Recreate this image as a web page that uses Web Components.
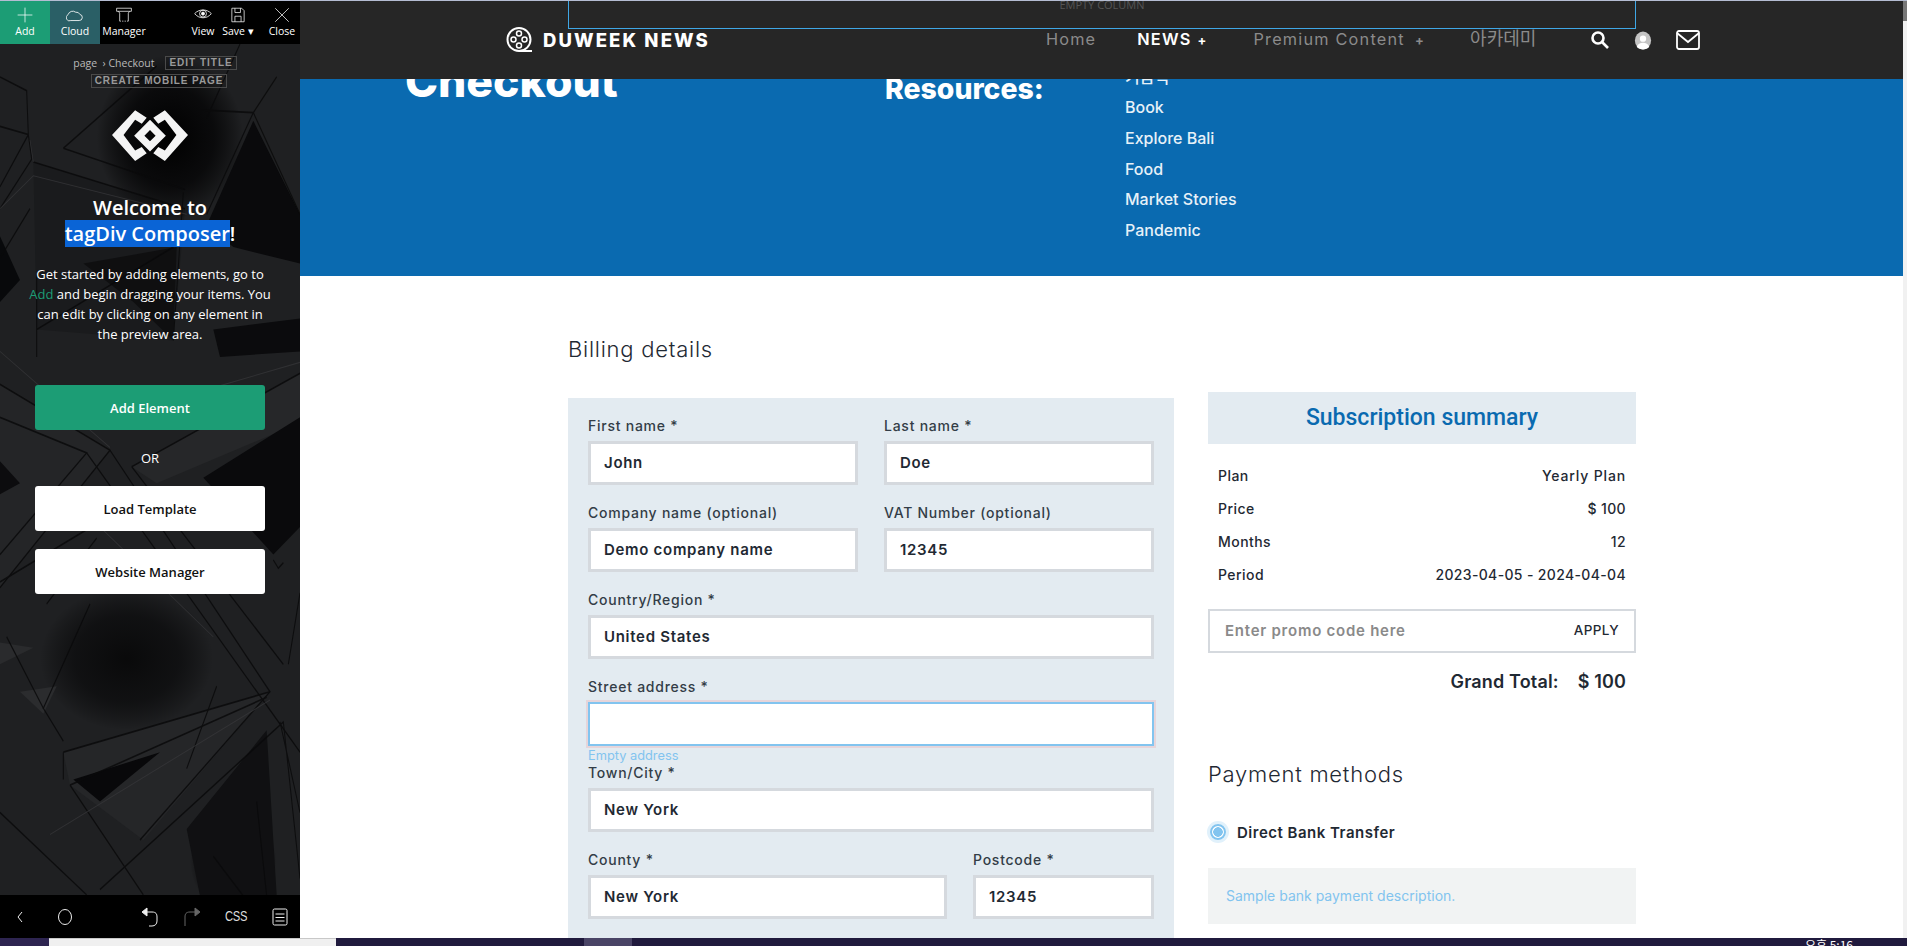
<!DOCTYPE html>
<html lang="en">
<head>
<meta charset="utf-8">
<title>Checkout</title>
<style>
html,body{margin:0;padding:0;height:946px;overflow:hidden;background:#fff}
body{display:grid;grid-template-columns:300px 1fr;grid-template-rows:1px 937px 8px;font-family:"Inter","Noto Sans CJK KR",sans-serif}
.topline{grid-column:1/3;background:#b4bcd2}
task-bar{grid-column:1/3}
</style>
</head>
<body>
<div class="topline"></div>

<td-sidebar>
  <td-tool slot="tools" label="Add" w="50" tone="add"><svg viewBox="0 0 26 26"><path d="M13 1v24M1 13h24"/></svg></td-tool>
  <td-tool slot="tools" label="Cloud" w="50" tone="cloud"><svg viewBox="0 0 26 26" style="width:18px;height:18px"><path d="M7 21h12a4.500 4.500 0 0 0 1-8.900a5.500 5.500 0 0 0-6-3.100a7 7 0 0 0-11 3.500a4.600 4.600 0 0 0 4 8.500z"/></svg></td-tool>
  <td-tool slot="tools" label="Manager" w="48"><svg viewBox="0 0 26 26"><path d="M1 2h24v5H1zM4 7l2 3v13M22 7l-2 3v13"/><path stroke-dasharray="2 2" d="M6 23h14"/></svg></td-tool>
  <span slot="tools" style="flex:1"></span>
  <td-tool slot="tools" label="View" w="30"><svg viewBox="0 0 26 26" style="width:18px;height:18px"><path d="M1 11c6-7 18-7 24 0c-6 8-18 8-24 0z"/><circle cx="13" cy="11" r="5"/><circle cx="13" cy="11" r="2.200" fill="#fff"/></svg></td-tool>
  <td-tool slot="tools" label="Save ▾" w="40"><svg viewBox="0 0 26 26"><path d="M3 2h16l4 4v18H3zM8 2v7h9V2M8 24v-9h10v9"/></svg></td-tool>
  <span slot="tools" style="width:6px"></span>
  <td-tool slot="tools" label="Close" w="36"><svg viewBox="0 0 26 26"><path d="M2 2l22 22M24 2L2 24"/></svg></td-tool>
</td-sidebar>

<preview-pane>
  <site-header></site-header>
  <page-hero></page-hero>
  <checkout-body></checkout-body>
</preview-pane>

<task-bar></task-bar>

<script>
class TdTool extends HTMLElement{
  constructor(){
    super();
    this.attachShadow({mode:'open'});
    const tone = this.getAttribute('tone');
    const bg = tone === 'add' ? '#1c9d75' : tone === 'cloud' ? '#2a5f66' : 'transparent';
    this.shadowRoot.innerHTML = `
    <style>
    :host{display:flex;flex-direction:column;align-items:center;width:${this.getAttribute('w')}px;height:43px;background:${bg};color:#fff;font:500 10.500px "Open Sans",sans-serif}
    .ic{box-sizing:border-box;height:24px;display:flex;align-items:center;justify-content:center;padding-top:4px}
    ::slotted(svg){width:16px;height:16px;fill:none;stroke:#fff;stroke-width:1.200}
    span{line-height:13px;white-space:nowrap}
    </style>
    <div class="ic"><slot></slot></div>
    <span>${this.getAttribute('label')}</span>`;
  }
}
customElements.define('td-tool',TdTool);

const sidebarTpl = document.createElement('template');
sidebarTpl.innerHTML = `
<style>
:host{display:flex;flex-direction:column;position:relative;width:300px;height:937px;background:#1f2022;overflow:hidden;color:#fff;font-family:"Open Sans",sans-serif}
.art{position:absolute;left:0;top:43px;width:300px;height:852px}
.tools,.foot,.inner{position:relative}
.tools{display:flex;height:43px;background:#000}
.inner{flex:1;display:flex;flex-direction:column;align-items:center}
.crumbs{display:flex;align-items:center;justify-content:center;height:15px;margin:11px 0 0 10px;font-size:10.500px;color:#b9b9b9;gap:5px}
.tag{border:1px solid #4a4a4a;font:700 10px "Liberation Sans",sans-serif;letter-spacing:1px;color:#9a9a9a;padding:0 3px;line-height:12px;margin-left:6px}
.tag.mobile{margin:4px 0 0 18px;line-height:12px;letter-spacing:.9px;padding:0 3px}
.logo{margin-top:21px;display:block}
h2{margin:33px 0 0;font-size:20px;font-weight:600;line-height:26px;text-align:center}
h2 b{font-weight:600;background:#0a64d6}
p{margin:17px 0 0;width:245px;font-size:13px;line-height:20px;text-align:center;color:#fff}
p i{font-style:normal;color:#1c9d75}
.btn{display:flex;align-items:center;justify-content:center;width:230px;height:45px;border-radius:3px;background:#fff;color:#111;font-size:13px;font-weight:600}
.btn.go{background:#1c9d75;color:#fff;margin-top:41px}
.or{height:56px;line-height:56px;font-size:13px}
.btn + .btn{margin-top:18px}
.foot{height:43px;background:#000;display:flex;align-items:center;color:#ddd}
.foot svg{position:absolute;top:12px;width:20px;height:20px;fill:none;stroke:#eee;stroke-width:1}
.foot span{position:absolute;left:225px;top:13px;font:400 14px "Liberation Sans",sans-serif;letter-spacing:-.3px;transform:scaleX(.8);transform-origin:left}
</style>
<svg class="art" viewBox="0 0 900 1552" preserveAspectRatio="none">
  <defs>
    <radialGradient id="d"><stop offset="0" stop-color="#000"/><stop offset=".6" stop-color="#050506" stop-opacity=".8"/><stop offset="1" stop-color="#000" stop-opacity="0"/></radialGradient>
  </defs>
  <polygon points="0,620 330,740 0,990" fill="#242527"/>
  <polygon points="190,1290 810,1180 430,1450 210,1350" fill="#252628"/>
  <polygon points="395,770 900,600 900,690 470,800" fill="#262729"/>
  <polygon points="100,215 555,300 520,540 110,520" fill="#1a1b1d"/>
  <ellipse cx="510" cy="170" rx="220" ry="150" fill="url(#d)"/>
  <ellipse cx="380" cy="1120" rx="260" ry="130" fill="url(#d)" opacity=".7"/>
  <ellipse cx="700" cy="1490" rx="130" ry="90" fill="url(#d)"/>
  <polygon points="620,330 760,140 900,310 900,400 700,370" fill="#0a0a0c"/>
  <polygon points="250,400 530,370 520,540 400,470" fill="#0c0c0e" opacity=".8"/>
  <polygon points="640,520 900,500 900,560 660,570" fill="#0b0b0d"/>
  <polygon points="0,350 60,430 0,470" fill="#08090b"/>
  <polygon points="610,790 900,680 900,880 820,930" fill="#0a0a0c"/>
  <polygon points="0,760 60,800 0,820" fill="#0c0c0e"/>
  <polygon points="220,1340 480,1290 300,1380" fill="#08080a"/>
  <polygon points="0,1090 100,1100 0,1130" fill="#2a2b2d"/>
  <polygon points="60,1180 170,1170 130,1220" fill="#2b2c2e"/>
  <polygon points="560,1430 800,1250 830,1550 600,1552" fill="#101012"/>
  <g fill="none" stroke="#0a0a0b" stroke-width="3" opacity=".85">
    <path d="M0 150L85 165L80 85L0 60M85 165L0 260M85 165L95 210L0 300M190 190L470 40M190 190L555 265M100 215L555 300M90 300L0 390"/>
    <path d="M620 135L720 0M600 120L760 125L830 60M760 125L900 310M760 125L620 310M550 270L520 540M110 420V570M110 520L520 370"/>
    <path d="M0 620L330 740L0 990M0 680L260 745L0 930M330 740L810 1180L420 1450M395 770L850 1130M395 770L900 600M260 745L900 1290M140 1020L290 900"/>
    <path d="M190 1290L810 1180M190 1290V1340M210 1350L800 1190M210 1350L430 1550M0 1400L260 1550M300 1540L850 1235L900 1520M840 1235L900 1400"/>
    <path d="M640 1480L730 1552M770 1380L800 1552M650 1170L560 1320M190 1270L130 1210L270 1020M820 940L835 955L850 945M865 1130L900 1000"/>
    <path d="M0 980L300 870M20 1080L130 1210"/>
  </g>
  <g fill="none" stroke="#37383a" stroke-width="2" opacity=".7">
    <path d="M0 300L100 240L560 310M100 215L90 175M330 735L0 560M900 580L560 640M300 880L640 1080M150 1440L810 1195"/>
  </g>
</svg>
<div class="tools"><slot name="tools"></slot></div>
<div class="inner">
  <div class="crumbs">page &nbsp;› Checkout <span class="tag">EDIT TITLE</span></div>
  <div class="tag mobile">CREATE MOBILE PAGE</div>
  <svg class="logo" width="76" height="53" viewBox="35 42 230 155">
    <path fill="#f4f4f4" d="M105 43L140 66L125 84L105 72L70 118L105 165L125 154L140 173L105 197L35 118zM195 43L160 66L175 84L195 72L230 118L195 165L175 154L160 173L195 197L265 118z"/>
    <path fill="#f4f4f4" fill-rule="evenodd" d="M150 72L198 120L150 168L102 120zM150 103L133 120L150 137L167 120z"/>
  </svg>
  <h2>Welcome to<br><b>tagDiv Composer</b>!</h2>
  <p>Get started by adding elements, go to <i>Add</i> and begin dragging your items. You can edit by clicking on any element in the preview area.</p>
  <div class="btn go">Add Element</div>
  <div class="or">OR</div>
  <div class="btn">Load Template</div>
  <div class="btn">Website Manager</div>
</div>
<div class="foot">
  <svg style="left:10px" viewBox="0 0 20 20"><path d="M12 5l-4 5 4 5"/></svg>
  <svg style="left:55px" viewBox="0 0 20 20"><ellipse cx="10" cy="10" rx="6.500" ry="7.500"/></svg>
  <svg style="left:141px" viewBox="0 0 20 20"><path d="M4 5h7c4 0 5 2 5 5v4c0 3-2 5-5 5H8"/><path fill="#eee" d="M6 1v8L1 5z"/></svg>
  <svg style="left:181px;stroke:#666" viewBox="0 0 20 20"><path d="M16 5H9C5 5 4 7 4 10v9"/><path fill="#666" d="M14 1v8l5-4z"/></svg>
  <span>CSS</span>
  <svg style="left:270px" viewBox="0 0 20 20"><rect x="3" y="2" width="14" height="16" rx="1.500"/><path d="M5.500 7h9M5.500 10.500h9M5.500 14h9"/></svg>
</div>`;
class TdSidebar extends HTMLElement{
  constructor(){
    super();
    this.attachShadow({mode:'open'});
    this.shadowRoot.appendChild(sidebarTpl.content.cloneNode(true));
  }
}
customElements.define('td-sidebar',TdSidebar);

class PreviewPane extends HTMLElement{
  constructor(){
    super();
    this.attachShadow({mode:'open'}).innerHTML = `
    <style>
    :host{display:block;position:relative;height:937px;overflow:hidden;background:#fff;padding-right:4px;box-sizing:border-box}
    .bar{position:absolute;right:0;top:0;bottom:0;width:4px;background:#f1f1f1}
    .bar i{display:block;height:20px;background:#777}
    </style>
    <slot></slot>
    <div class="bar"><i></i></div>`;
  }
}
customElements.define('preview-pane',PreviewPane);

const headerTpl = document.createElement('template');
headerTpl.innerHTML = `
<style>
:host{display:flex;align-items:center;position:relative;height:78px;background:#262626;color:#fff;padding-left:206px;font-family:"Inter","Noto Sans CJK KR",sans-serif;z-index:2}
.empty{position:absolute;left:268px;top:-1px;width:1066px;height:28px;border:1px solid #3fa7e6;border-top:0;text-align:center;font:400 11px/10px "Open Sans",sans-serif;color:#555;overflow:hidden}
.logo{display:flex;align-items:center;gap:10px;font-weight:800;font-size:18.500px;letter-spacing:2.100px;white-space:nowrap}
nav{display:flex;margin:-2px 0 0 336px;font-size:16.300px;letter-spacing:1.200px;color:#8b8b8b;white-space:nowrap}
nav a.on{color:#fff;font-weight:600}
nav em{font-style:normal;font-weight:700;margin-left:6px;font-size:13px}
.ko{font-size:18px;letter-spacing:0;line-height:20px}
.icons{display:flex;align-items:center;margin-left:54px}
</style>
<div class="empty">EMPTY COLUMN</div>
<div class="logo">
  <svg width="27" height="28" viewBox="0 0 27 28" fill="none" stroke="#fff" stroke-width="2">
    <circle cx="13" cy="13.500" r="11.500"/><path d="M13 25h13"/>
    <g stroke-width="1.500"><circle cx="13" cy="7.500" r="2.500"/><circle cx="13" cy="19.500" r="2.500"/><circle cx="7.500" cy="13.500" r="2.500"/><circle cx="18.500" cy="13.500" r="2.500"/></g>
  </svg>
  DUWEEK NEWS
</div>
<nav>
  <a>Home</a>
  <a class="on" style="margin-left:41px">NEWS<em>+</em></a>
  <a style="margin-left:46px">Premium Content<em>&nbsp;+</em></a>
  <a class="ko" style="margin-left:45px">아카데미</a>
</nav>
<div class="icons">
  <svg width="20" height="20" viewBox="0 0 20 20" fill="none" stroke="#fff" stroke-width="2.600"><circle cx="8" cy="8" r="5.500"/><path d="M12 12l6 6"/></svg>
  <svg style="margin-left:24px" width="18" height="21" viewBox="0 0 20 22"><ellipse cx="10" cy="11" rx="9" ry="10" fill="#c4c4c4"/><circle cx="10" cy="9" r="3.500" fill="#fff"/><path d="M3 18c2-6 12-6 14 0c-3 4-11 4-14 0z" fill="#fff"/></svg>
  <svg style="margin-left:24px" width="24" height="20" viewBox="0 0 24 20" fill="none" stroke="#fff" stroke-width="1.800"><rect x="1" y="1" width="22" height="18" rx="2"/><path d="M1 3l11 9 11-9"/></svg>
</div>`;
class SiteHeader extends HTMLElement{
  constructor(){
    super();
    this.attachShadow({mode:'open'}).appendChild(headerTpl.content.cloneNode(true));
  }
}
customElements.define('site-header',SiteHeader);

const heroTpl = document.createElement('template');
heroTpl.innerHTML = `
<style>
:host{display:block;height:197px;overflow:hidden;background:#0a6ab0;color:#fff;font-family:"Inter","Noto Sans CJK KR",sans-serif}
.inner{display:flex;margin-top:-28px;padding-left:105px}
h1{margin:0;width:480px;font-size:44.500px;line-height:60px;font-weight:800}
h3{margin:0;width:240px;padding-top:18px;font-size:28.400px;line-height:40px;font-weight:800}
ul{margin:0;padding:10.500px 0 0;list-style:none;font-size:16px;font-weight:500;line-height:30.700px;color:#e7f1f8}
</style>
<div class="inner">
  <h1>Checkout</h1>
  <h3>Resources:</h3>
  <ul><li>기금력</li><li>Book</li><li>Explore Bali</li><li>Food</li><li>Market Stories</li><li>Pandemic</li></ul>
</div>`;
class PageHero extends HTMLElement{
  constructor(){
    super();
    this.attachShadow({mode:'open'}).appendChild(heroTpl.content.cloneNode(true));
  }
}
customElements.define('page-hero',PageHero);

class FormField extends HTMLElement{
  constructor(){
    super();
    const err = this.getAttribute('error');
    this.attachShadow({mode:'open'}).innerHTML = `
    <style>
    :host{display:block;margin-bottom:${err ? 0 : 15}px;min-width:0}
    label{display:block;height:26px;line-height:26px;font-size:14px;font-weight:500;color:#333d47;letter-spacing:.75px}
    .box{box-sizing:border-box;height:44px;margin-top:2px;background:#fff;border:3px solid #d5d9de;padding:0 13px;line-height:37px;font-size:15px;font-weight:600;color:#1f2933;letter-spacing:.7px}
    .box.err{border:2px solid #82c4ef;outline:2px solid #e6d5da;line-height:38px}
    small{display:block;height:14px;margin:3px 0 -3px;font-size:12.800px;line-height:14px;color:#82c4ef}
    </style>
    <label>${this.getAttribute('label')}</label>
    <div class="box ${err ? 'err' : ''}"><slot></slot></div>
    ${err ? `<small>${err}</small>` : ''}`;
  }
}
customElements.define('form-field',FormField);

const billingTpl = document.createElement('template');
billingTpl.innerHTML = `
<style>
:host{display:block;width:606px;box-sizing:border-box;margin-top:6px;padding:15px 20px 40px;background:#e3ebf1;font-family:"Inter",sans-serif}
.two{display:grid;grid-template-columns:270px 270px;column-gap:26px}
.wide{display:grid;grid-template-columns:359px 181px;column-gap:26px}
</style>
<div class="two">
  <form-field label="First name *">John</form-field>
  <form-field label="Last name *">Doe</form-field>
  <form-field label="Company name (optional)">Demo company name</form-field>
  <form-field label="VAT Number (optional)">12345</form-field>
</div>
<form-field label="Country/Region *">United States</form-field>
<form-field label="Street address *" error="Empty address"></form-field>
<form-field label="Town/City *">New York</form-field>
<div class="wide">
  <form-field label="County *">New York</form-field>
  <form-field label="Postcode *">12345</form-field>
</div>`;
class BillingForm extends HTMLElement{
  constructor(){
    super();
    this.attachShadow({mode:'open'}).appendChild(billingTpl.content.cloneNode(true));
  }
}
customElements.define('billing-form',BillingForm);

const summaryTpl = document.createElement('template');
summaryTpl.innerHTML = `
<style>
:host{display:block;width:428px;font-family:"Inter",sans-serif;color:#1f2933}
h4{margin:0;height:52px;text-align:center;background:#e3ebf1;color:#0a6ab0;font:500 23px/52px Roboto,sans-serif}
dl{margin:15px 0 0;padding:0 10px;display:grid;grid-template-columns:1fr auto;grid-auto-rows:33px;align-items:center;font-size:14px;font-weight:500;letter-spacing:.35px}
dt,dd{margin:0}
dt{letter-spacing:.45px}
dd{text-align:right}
dd.t{letter-spacing:.85px}
.promo{display:flex;justify-content:space-between;align-items:center;box-sizing:border-box;height:44px;margin-top:18px;padding:0 15px 2px;border:2px solid #d5d9de;font-size:15px;font-weight:600;color:#8a8a8a;letter-spacing:.75px}
.promo b{font-size:13.500px;font-weight:500;color:#1f2933;letter-spacing:.4px}
.total{display:flex;justify-content:flex-end;gap:19px;height:30px;line-height:30px;margin-top:14px;padding-right:10px;font-size:18px;font-weight:600;letter-spacing:.15px}
h5{margin:60px 0 0;height:34px;line-height:34px;font-size:22px;font-weight:300;color:#1f2933;letter-spacing:.75px}
.radio{display:flex;align-items:center;gap:11px;height:30px;margin-top:26px;font-size:15px;font-weight:600;letter-spacing:.5px}
.radio i{display:block;box-sizing:border-box;width:16px;height:16px;margin-left:2px;border-radius:50%;border:2px solid #82c4ef;box-shadow:0 0 0 3px #e1f1fb;background:radial-gradient(circle,#82c4ef 4.500px,#fff 5px)}
.desc{box-sizing:border-box;height:56px;margin-top:21px;padding:0 18px;line-height:56px;background:#f1f3f3;color:#82c4ef;font-size:14px}
</style>
<h4>Subscription summary</h4>
<dl>
  <dt>Plan</dt><dd class="t">Yearly Plan</dd>
  <dt>Price</dt><dd>$ 100</dd>
  <dt>Months</dt><dd>12</dd>
  <dt>Period</dt><dd>2023-04-05 - 2024-04-04</dd>
</dl>
<div class="promo">Enter promo code here<b>APPLY</b></div>
<div class="total"><span>Grand Total:</span><span>$ 100</span></div>
<h5>Payment methods</h5>
<div class="radio"><i></i>Direct Bank Transfer</div>
<div class="desc">Sample bank payment description.</div>`;
class OrderSummary extends HTMLElement{
  constructor(){
    super();
    this.attachShadow({mode:'open'}).appendChild(summaryTpl.content.cloneNode(true));
  }
}
customElements.define('order-summary',OrderSummary);

class CheckoutBody extends HTMLElement{
  constructor(){
    super();
    this.attachShadow({mode:'open'}).innerHTML = `
    <style>
    :host{display:block;padding:54px 0 0 268px;font-family:"Inter",sans-serif}
    h3{margin:0 0 24px;height:38px;line-height:38px;font-size:22px;font-weight:300;color:#1f2933;letter-spacing:.75px}
    .cols{display:flex;gap:34px;align-items:flex-start}
    </style>
    <h3>Billing details</h3>
    <div class="cols"><billing-form></billing-form><order-summary></order-summary></div>`;
  }
}
customElements.define('checkout-body',CheckoutBody);

class TaskBar extends HTMLElement{
  constructor(){
    super();
    this.attachShadow({mode:'open'}).innerHTML = `
    <style>
    :host{display:flex;height:8px;background:#201a3d;overflow:hidden;color:#fff;font:12px/14px "Noto Sans CJK KR",sans-serif}
    .a{width:49px;background:#2d2450}
    .b{width:287px;background:#f0f0f0;border-top:1px solid #c8c8c8;box-sizing:border-box}
    .c{width:248px}
    .d{width:48px;background:#4a4466}
    .e{flex:1;text-align:right;padding-right:54px}
    </style>
    <div class="a"></div><div class="b"></div><div class="c"></div><div class="d"></div><div class="e">오후 5:16</div>`;
  }
}
customElements.define('task-bar',TaskBar);
</script>
</body>
</html>
